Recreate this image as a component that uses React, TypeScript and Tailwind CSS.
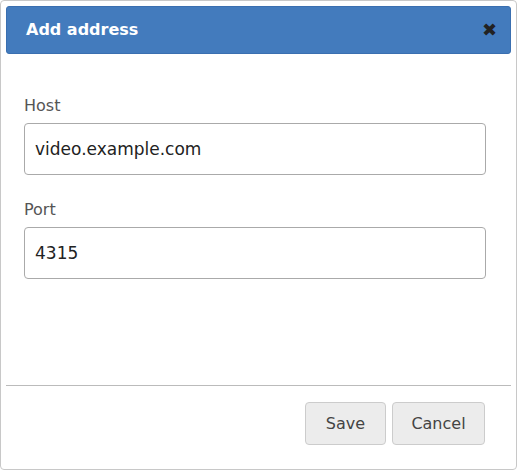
export default function App() {
  return (
    <div className="h-[470px] w-[517px] bg-white" style={{ fontFamily: '"DejaVu Sans", Verdana, sans-serif' }}>
      <div className="flex h-[470px] flex-col rounded border border-[#c8c8c8] bg-white px-[5px] pt-[5px]">
        <div className="flex h-[48px] items-center justify-between rounded-[3px] border border-[#3a6fb0] bg-[#437bbd] pl-[19px] pr-[13px]">
          <span className="text-[16px] font-bold text-white">Add address</span>
          <span className="text-[18px] font-bold leading-none text-[#222]">✖</span>
        </div>
        <div className="flex flex-1 flex-col px-[18px] pt-[40px]">
          <label className="mb-[5px] text-[16px] text-[#555]">Host</label>
          <input readOnly value="video.example.com" className="h-[52px] w-[462px] rounded border border-[#aaa] px-[10px] text-[17px] text-[#222] outline-none" />
          <label className="mb-[5px] mt-[23px] text-[16px] text-[#555]">Port</label>
          <input readOnly value="4315" className="h-[52px] w-[462px] rounded border border-[#aaa] px-[10px] text-[17px] text-[#222] outline-none" />
        </div>
        <div className="border-t border-[#bbb]" />
        <div className="flex h-[83px] items-start justify-end gap-[6px] pr-[26px] pt-[16px]">
          <button className="h-[43px] w-[81px] rounded border border-[#ccc] bg-[#ececec] text-[16px] text-[#444]">Save</button>
          <button className="h-[43px] w-[93px] rounded border border-[#ccc] bg-[#ececec] text-[16px] text-[#444]">Cancel</button>
        </div>
      </div>
    </div>
  );
}
